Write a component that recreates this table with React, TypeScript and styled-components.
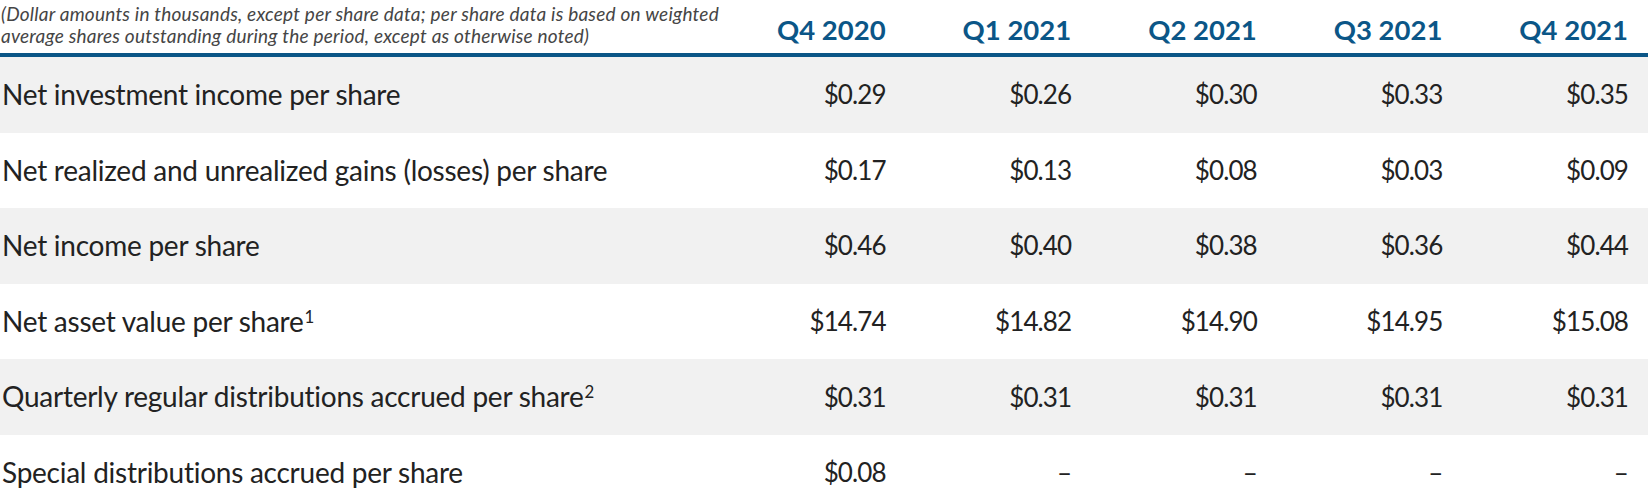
import React from "react";
import styled, { createGlobalStyle } from "styled-components";

const GlobalStyle = createGlobalStyle`
  html, body {
    margin: 0;
    padding: 0;
    background: #ffffff;
  }
  body {
    font-family: "Lato", "Liberation Sans", sans-serif;
    color: #1e1e1e;
  }
`;

const COLS = "minmax(0, 1fr) repeat(5, 185.6px)";

const Table = styled.div`
  width: 1648px;
  box-sizing: border-box;
`;

const HeaderRow = styled.div`
  display: grid;
  grid-template-columns: ${COLS};
  height: 53px;
  padding: 0 20px 0 1px;
  border-bottom: 4px solid #0b5687;
`;

const Note = styled.div`
  align-self: start;
  padding-top: 3px;
  font-family: "Lato", "Liberation Sans", sans-serif;
  font-style: italic;
  font-size: 19px;
  letter-spacing: 0.22px;
  line-height: 21.5px;
  white-space: nowrap;
  color: #454545;
`;

const Quarter = styled.div`
  align-self: end;
  padding-bottom: 7px;
  text-align: right;
  font-family: "Lato", "Liberation Sans", sans-serif;
  font-weight: 700;
  font-size: 27.5px;
  line-height: 1.2;
  color: #0b5687;
`;

const Row = styled.div<{ $shaded: boolean }>`
  display: grid;
  grid-template-columns: ${COLS};
  align-items: center;
  height: 75.6px;
  padding: 0 20px 0 2px;
  background: ${(p) => (p.$shaded ? "#f1f1f1" : "#ffffff")};
`;

const Label = styled.div`
  font-size: 28px;
  font-weight: 400;
  letter-spacing: -0.25px;
  line-height: 1.2;
  white-space: nowrap;
  color: #222222;
`;

const Value = styled.div`
  font-size: 26px;
  font-weight: 400;
  letter-spacing: -0.9px;
  line-height: 1.2;
  text-align: right;
  white-space: nowrap;
  color: #222222;
`;

const Sup = styled.sup`
  font-size: 0.6em;
  line-height: 0;
  vertical-align: 0.55em;
  margin-left: 1px;
`;

type RowData = { label: string; note?: string; values: string[] };

const quarters = ["Q4 2020", "Q1 2021", "Q2 2021", "Q3 2021", "Q4 2021"];

const rows: RowData[] = [
  { label: "Net investment income per share", values: ["$0.29", "$0.26", "$0.30", "$0.33", "$0.35"] },
  { label: "Net realized and unrealized gains (losses) per share", values: ["$0.17", "$0.13", "$0.08", "$0.03", "$0.09"] },
  { label: "Net income per share", values: ["$0.46", "$0.40", "$0.38", "$0.36", "$0.44"] },
  { label: "Net asset value per share", note: "1", values: ["$14.74", "$14.82", "$14.90", "$14.95", "$15.08"] },
  { label: "Quarterly regular distributions accrued per share", note: "2", values: ["$0.31", "$0.31", "$0.31", "$0.31", "$0.31"] },
  { label: "Special distributions accrued per share", values: ["$0.08", "–", "–", "–", "–"] },
];

export default function App() {
  return (
    <>
      <GlobalStyle />
      <Table>
        <HeaderRow>
          <Note>
            (Dollar amounts in thousands, except per share data; per share data is based on weighted
            <br />
            average shares outstanding during the period, except as otherwise noted)
          </Note>
          {quarters.map((q) => (
            <Quarter key={q}>{q}</Quarter>
          ))}
        </HeaderRow>
        {rows.map((r, i) => (
          <Row key={r.label} $shaded={i % 2 === 0}>
            <Label>
              {r.label}
              {r.note && <Sup>{r.note}</Sup>}
            </Label>
            {r.values.map((v, j) => (
              <Value key={j}>{v}</Value>
            ))}
          </Row>
        ))}
      </Table>
    </>
  );
}
